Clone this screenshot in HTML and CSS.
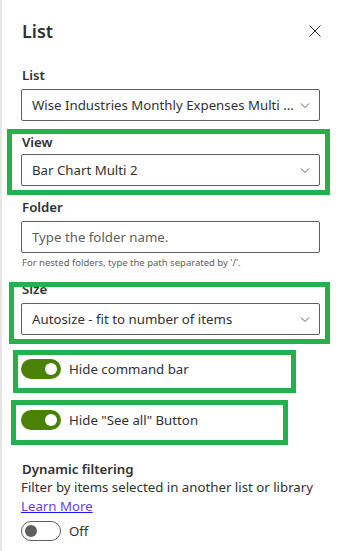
FILE: index.html
```html
<!DOCTYPE html>
<html lang="en">
<head>
    <meta charset="UTF-8">
    <title>List</title>
    <link rel="stylesheet" href="styles.css">
</head>
<body>
    <div class="panel">
        <div class="panel-header">
            <h1>List</h1>
            <svg class="close" width="12" height="12" viewBox="0 0 12 12"><path d="M0.5 0.5 L11.5 11.5 M11.5 0.5 L0.5 11.5" stroke="#323130" stroke-width="1" fill="none"/></svg>
        </div>

        <div class="field">
            <label class="label">List</label>
            <div class="dropdown">
                <span>Wise Industries Monthly Expenses Multi ...</span>
                <svg width="12" height="12" viewBox="0 0 12 12"><path d="M2 4.5 L6 8.5 L10 4.5" stroke="#605e5c" stroke-width="1" fill="none"/></svg>
            </div>
        </div>

        <div class="mark mark-view">
            <label class="label">View</label>
            <div class="dropdown">
                <span>Bar Chart Multi 2</span>
                <svg width="12" height="12" viewBox="0 0 12 12"><path d="M2 4.5 L6 8.5 L10 4.5" stroke="#605e5c" stroke-width="1" fill="none"/></svg>
            </div>
        </div>

        <div class="field field-folder">
            <label class="label">Folder</label>
            <div class="textbox">Type the folder name.</div>
            <div class="hint">For nested folders, type the path separated by '/'.</div>
        </div>

        <div class="mark mark-size">
            <label class="label">Size</label>
            <div class="dropdown">
                <span>Autosize - fit to number of items</span>
                <svg width="12" height="12" viewBox="0 0 12 12"><path d="M2 4.5 L6 8.5 L10 4.5" stroke="#605e5c" stroke-width="1" fill="none"/></svg>
            </div>
        </div>

        <div class="mark mark-toggle mark-command">
            <div class="toggle on"><span class="knob"></span></div>
            <span class="toggle-text">Hide command bar</span>
        </div>

        <div class="mark mark-toggle mark-seeall">
            <div class="toggle on"><span class="knob"></span></div>
            <span class="toggle-text">Hide "See all" Button</span>
        </div>

        <div class="dynamic">
            <div class="label">Dynamic filtering</div>
            <div class="desc">Filter by items selected in another list or library</div>
            <a href="#" class="learn">Learn More</a>
            <div class="toggle-row">
                <div class="toggle off"><span class="knob"></span></div>
                <span class="toggle-text">Off</span>
            </div>
        </div>
    </div>
</body>
</html>
```

FILE: styles.css
```css
body {
    margin: 0;
    padding: 0;
    background-color: #fff;
    font-family: "Noto Sans", "Open Sans", sans-serif;
    color: #323130;
}
.panel {
    border-left: 2px solid #e6e6e6;
    min-height: 551px;
    box-sizing: border-box;
    padding: 17px 19px 0 19px;
}
.panel-header {
    display: flex;
    justify-content: space-between;
    align-items: center;
    height: 28px;
}
.panel-header h1 {
    margin: 0;
    font-size: 18px;
    font-weight: 600;
    line-height: 28px;
    padding-left: 1px;
}
.panel-header .close {
    margin-right: -1px;
}
.label {
    display: block;
    font-size: 13.25px;
    font-weight: 600;
    line-height: 20px;
    padding-left: 1px;
}
.field {
    margin-top: 20px;
}
.field .label {
    margin-bottom: 4px;
}
.dropdown, .textbox {
    height: 32px;
    box-sizing: border-box;
    border: 1px solid #605e5c;
    border-radius: 2px;
    display: flex;
    align-items: center;
    justify-content: space-between;
    padding: 0 8px 0 10px;
    font-size: 13.25px;
    white-space: nowrap;
    overflow: hidden;
}
.dropdown span {
    overflow: hidden;
    text-overflow: ellipsis;
}
.textbox {
    color: #605e5c;
}
.hint {
    font-size: 9.5px;
    color: #605e5c;
    margin-top: 3px;
    line-height: 14px;
    padding-left: 1px;
}
/* green annotation frames: outline drawn over content */
.mark {
    border: 5px solid transparent;
    outline: 5px solid #22b14c;
    outline-offset: -5px;
    box-sizing: border-box;
}
.mark-view {
    margin: 8px -10px 0 -14px;
    padding: 0 5px 4px 9px;
}
.mark-view .label {
    margin-top: -2px;
    margin-bottom: 2px;
}
.field-folder {
    margin-top: 2px;
}
.mark-size {
    margin: 12px -10px 0 -12px;
    padding: 0 5px 4px 7px;
}
.mark-size .label {
    margin-top: -8px;
    margin-bottom: 4px;
}
.mark-toggle {
    display: flex;
    align-items: center;
    gap: 8px;
}
.mark-command {
    margin: 6px 0 0 -8px;
    width: 283px;
    height: 43px;
    padding: 0 0 5px 3px;
}
.mark-seeall {
    margin: 7px 0 0 -10px;
    width: 277px;
    height: 45px;
    padding: 0 0 5px 5px;
}
.toggle {
    width: 40px;
    height: 20px;
    box-sizing: border-box;
    border-radius: 10px;
    display: flex;
    align-items: center;
    padding: 0 4px;
    flex-shrink: 0;
}
.toggle .knob {
    width: 12px;
    height: 12px;
    border-radius: 50%;
}
.toggle.on {
    background-color: #498205;
    justify-content: flex-end;
}
.toggle.on .knob {
    background-color: #fff;
}
.toggle.off {
    border: 1px solid #605e5c;
    padding: 0 3px;
}
.toggle.off .knob {
    background-color: #605e5c;
}
.toggle-text {
    font-size: 13.25px;
    line-height: 20px;
}
.dynamic {
    margin-top: 14px;
}
.dynamic .label {
    margin-bottom: -1px;
}
.desc {
    font-size: 13.25px;
    line-height: 19px;
}
.learn {
    display: block;
    width: fit-content;
    font-size: 13.25px;
    line-height: 19px;
    color: #6b40e6;
    text-decoration-color: #1a1aee;
}
.toggle-row {
    display: flex;
    align-items: center;
    gap: 8px;
    margin-top: 5px;
}
```
